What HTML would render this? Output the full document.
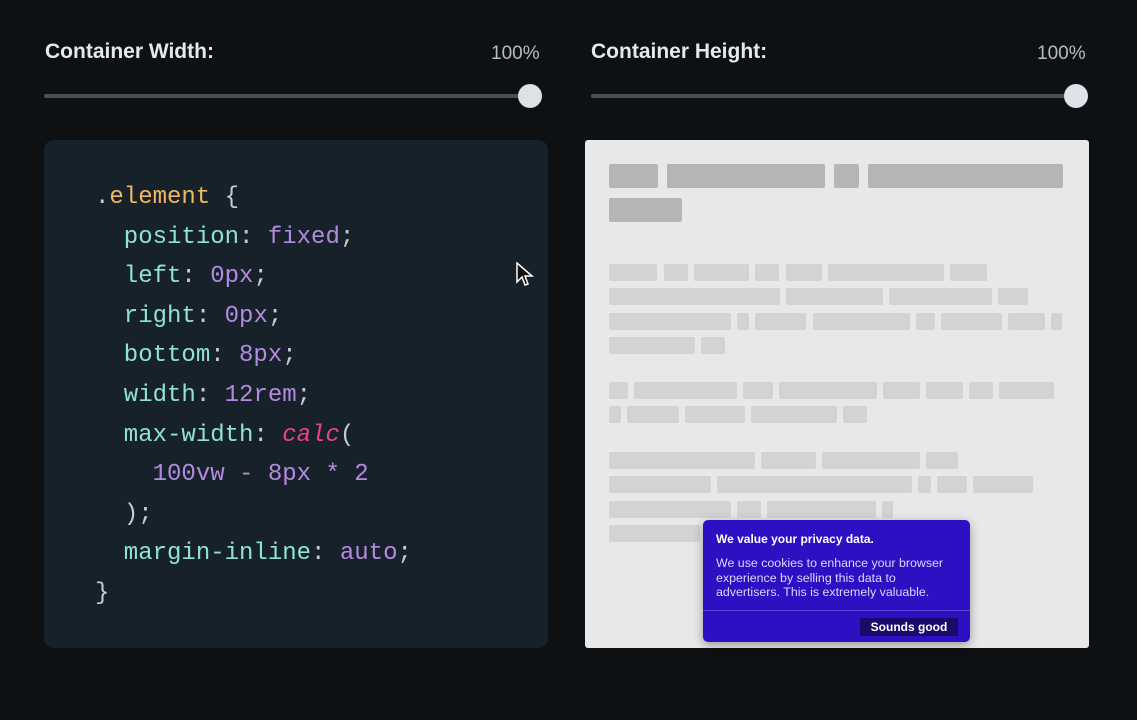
<!DOCTYPE html><html><head><style>
body{margin:0;width:1137px;height:720px;background:#0e1113;font-family:"Liberation Sans",sans-serif;position:relative;overflow:hidden}
.a{position:absolute}
.lbl{color:#e6e8ea;font-size:21px;font-weight:bold;top:40px}
.pct{color:#b8bcc0;font-size:19px;top:43px}
.track{height:4px;background:#4a5056;border-radius:2px;top:94px}
.knob{width:24px;height:24px;border-radius:50%;background:#dde2e8;top:84px}
.code{left:44px;top:140px;width:504px;height:508px;background:#17212a;border-radius:10px}
pre{margin:0;position:absolute;left:95px;top:178px;font-family:"Liberation Mono",monospace;font-size:24px;line-height:39.6px;color:#8fe3d0}
.o{color:#f0b860}.p{color:#b48ae0}.w{color:#c6ccd2}.r{color:#f0408a;font-style:italic}
.pan{left:585px;top:140px;width:504px;height:508px;background:#e8e8e8;border-radius:3px}
.b{position:absolute;height:17px;background:#d3d3d3;border-radius:2px}
.h{background:#b5b5b5;height:24px}
.pop{left:703px;top:520px;width:267px;height:122px;background:#2e10c2;border-radius:5px;box-shadow:0 3px 10px rgba(0,0,0,.35);color:#fff;font-size:12px}
</style></head><body>
<div class="a lbl" style="left:45px">Container Width:</div>
<div class="a pct" style="left:491px">100%</div>
<div class="a track" style="left:44px;width:486px"></div>
<div class="a knob" style="left:518px"></div>
<div class="a lbl" style="left:591px">Container Height:</div>
<div class="a pct" style="left:1037px">100%</div>
<div class="a track" style="left:591px;width:486px"></div>
<div class="a knob" style="left:1064px"></div>
<div class="a code"></div>
<pre><span class="w">.</span><span class="o">element</span><span class="w"> {</span>
  position<span class="w">: </span><span class="p">fixed</span><span class="w">;</span>
  left<span class="w">: </span><span class="p">0px</span><span class="w">;</span>
  right<span class="w">: </span><span class="p">0px</span><span class="w">;</span>
  bottom<span class="w">: </span><span class="p">8px</span><span class="w">;</span>
  width<span class="w">: </span><span class="p">12rem</span><span class="w">;</span>
  max-width<span class="w">: </span><span class="r">calc</span><span class="w">(</span>
    <span class="p">100vw - 8px * 2</span>
  <span class="w">);</span>
  margin-inline<span class="w">: </span><span class="p">auto</span><span class="w">;</span>
<span class="w">}</span></pre>
<svg class="a" style="left:516px;top:262px" width="18" height="26" viewBox="0 0 18 26"><path d="M1 1 L1 20 L6 15 L9 23 L12 22 L9 14 L16 14 Z" fill="#111" stroke="#fff" stroke-width="1.5"/></svg>
<div class="a pan">
<div id="s"></div>
</div>
<script>
var rows=[
[164,24,1,[[609,658],[667,825],[834,859],[868,1063]]],
[198,24,1,[[609,682]]],
[264,17,0,[[609,657],[664,688],[694,749],[755,779],[786,822],[828,944],[950,987]]],
[288,17,0,[[609,780],[786,883],[889,992],[998,1028]]],
[313,17,0,[[609,731],[737,749],[755,806],[813,910],[916,935],[941,1002],[1008,1045],[1051,1062]]],
[337,17,0,[[609,695],[701,725]]],
[382,17,0,[[609,628],[634,737],[743,773],[779,877],[883,920],[926,963],[969,993],[999,1054]]],
[406,17,0,[[609,621],[627,679],[685,745],[751,837],[843,867]]],
[452,17,0,[[609,755],[761,816],[822,920],[926,958]]],
[476,17,0,[[609,711],[717,912],[918,931],[937,967],[973,1033]]],
[501,17,0,[[609,731],[737,761],[767,876],[882,893]]],
[525,17,0,[[609,700]]]];
var s=document.getElementById('s'),h='';
rows.forEach(function(r){r[3].forEach(function(x){h+='<div class="b'+(r[2]?' h':'')+'" style="left:'+(x[0]-585)+'px;top:'+(r[0]-140)+'px;width:'+(x[1]-x[0])+'px"></div>'})});
s.innerHTML=h;
</script>
<div class="a pop">
<div style="position:absolute;left:13px;top:12px;font-weight:bold">We value your privacy data.</div>
<div style="position:absolute;left:13px;top:36px;line-height:14.5px;color:#dcd6ff;width:236px;font-size:12.4px">We use cookies to enhance your browser experience by selling this data to advertisers. This is extremely valuable.</div>
<div style="position:absolute;left:0;right:0;top:90px;height:1px;background:#5a46d8"></div>
<div style="position:absolute;left:157px;top:98px;width:98px;height:18px;background:#1a0a6a;font-weight:bold;font-size:12px;text-align:center;line-height:18px">Sounds good</div>
</div>
</body></html>
